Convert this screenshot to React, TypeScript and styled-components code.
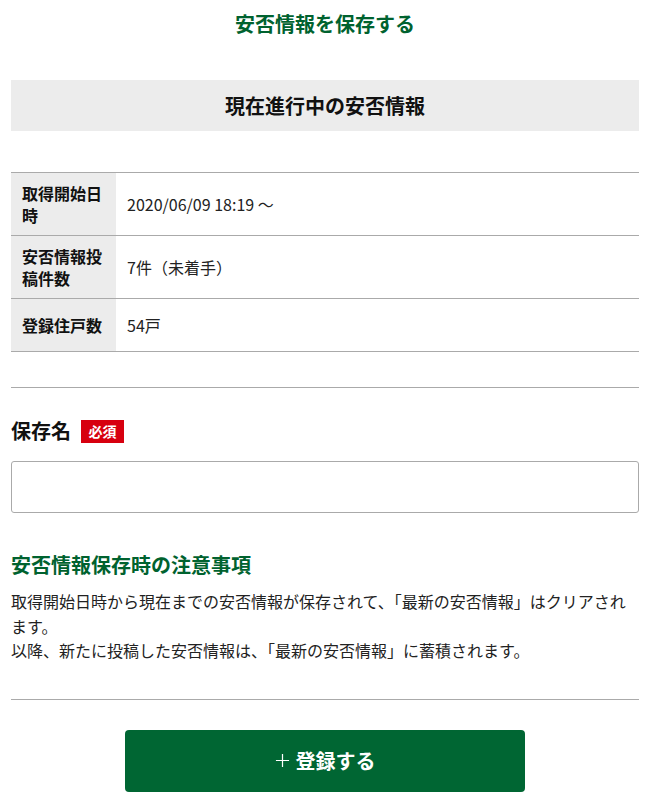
import React from 'react'
import styled, { createGlobalStyle } from 'styled-components'

const GlobalStyle = createGlobalStyle`
  body {
    margin: 0;
    background: #fff;
    font-family: "Noto Sans CJK JP", "Noto Sans", sans-serif;
    color: #222;
  }
`

type Row = {
  label: string
  value: string
}

const rows: Row[] = [
  { label: '取得開始日時', value: '2020/06/09 18:19 ～' },
  { label: '安否情報投稿件数', value: '7件（未着手）' },
  { label: '登録住戸数', value: '54戸' },
]

export default function App() {
  return (
    <Page>
      <GlobalStyle />
      <PageTitle>安否情報を保存する</PageTitle>

      <SectionBar>現在進行中の安否情報</SectionBar>

      <InfoList>
        {rows.map((row) => (
          <InfoRow key={row.label}>
            <LabelCell>{row.label}</LabelCell>
            <ValueCell>{row.value}</ValueCell>
          </InfoRow>
        ))}
      </InfoList>

      <Divider $top={35} />

      <FieldLabel>
        保存名
        <RequiredBadge>必須</RequiredBadge>
      </FieldLabel>
      <TextInput type="text" />

      <NoteTitle>安否情報保存時の注意事項</NoteTitle>
      <NoteText>
        取得開始日時から現在までの安否情報が保存されて、「最新の安否情報」はクリアされます。
        <br />
        以降、新たに投稿した安否情報は、「最新の安否情報」に蓄積されます。
      </NoteText>

      <Divider $top={36} />

      <ButtonRow>
        <SubmitButton type="button">
          <PlusIcon viewBox="0 0 16 16">
            <path d="M8 1v14M1 8h14" stroke="#fff" strokeWidth="1.3" fill="none" />
          </PlusIcon>
          登録する
        </SubmitButton>
      </ButtonRow>
    </Page>
  )
}

const Page = styled.div`
  width: 628px;
  padding: 0 14px 20px 11px;
  display: flex;
  flex-direction: column;
`

const PageTitle = styled.h1`
  margin: 9px 0 0;
  font-size: 20px;
  line-height: 30px;
  font-weight: 700;
  color: #00622f;
  text-align: center;
`

const SectionBar = styled.h2`
  margin: 41px 0 0;
  height: 51px;
  display: flex;
  align-items: center;
  justify-content: center;
  background: #ececec;
  font-size: 20px;
  font-weight: 700;
  color: #111;
`

const InfoList = styled.div`
  margin-top: 41px;
  border-top: 1px solid #aaa;
  display: flex;
  flex-direction: column;
`

const InfoRow = styled.div`
  display: flex;
  min-height: 52px;
  border-bottom: 1px solid #aaa;
`

const LabelCell = styled.div`
  width: 105px;
  box-sizing: border-box;
  padding: 9px 10px 9px 11px;
  display: flex;
  align-items: center;
  background: #ececec;
  font-size: 16px;
  line-height: 22px;
  font-weight: 700;
  color: #111;
`

const ValueCell = styled.div`
  flex: 1;
  padding: 9px 11px;
  display: flex;
  align-items: center;
  font-size: 16px;
  line-height: 22px;
  color: #222;
`

const Divider = styled.hr<{ $top: number }>`
  margin: ${(p) => p.$top}px 0 0;
  border: none;
  border-top: 1px solid #aaa;
  height: 0;
`

const FieldLabel = styled.div`
  margin-top: 28px;
  display: flex;
  align-items: center;
  gap: 10px;
  font-size: 20px;
  line-height: 30px;
  font-weight: 700;
  color: #111;
`

const RequiredBadge = styled.span`
  display: inline-flex;
  align-items: center;
  justify-content: center;
  width: 43px;
  height: 23px;
  background: #d7000f;
  color: #fff;
  font-size: 14px;
  font-weight: 700;
`

const TextInput = styled.input`
  margin-top: 15px;
  height: 52px;
  box-sizing: border-box;
  width: 100%;
  border: 1px solid #aaa;
  border-radius: 3px;
  padding: 0 12px;
  font-size: 16px;
  outline: none;
`

const NoteTitle = styled.h3`
  margin: 39px 0 0;
  font-size: 20px;
  line-height: 26px;
  font-weight: 700;
  color: #00622f;
`

const NoteText = styled.p`
  margin: 11px 0 0;
  font-size: 16px;
  line-height: 24.5px;
  color: #222;
`

const ButtonRow = styled.div`
  margin-top: 30px;
  display: flex;
  justify-content: center;
`

const SubmitButton = styled.button`
  width: 400px;
  height: 62px;
  border: none;
  border-radius: 4px;
  background: #006633;
  color: #fff;
  font-family: inherit;
  font-size: 20px;
  font-weight: 700;
  display: flex;
  align-items: center;
  justify-content: center;
  gap: 6px;
  cursor: pointer;
`

const PlusIcon = styled.svg`
  width: 15px;
  height: 15px;
`
